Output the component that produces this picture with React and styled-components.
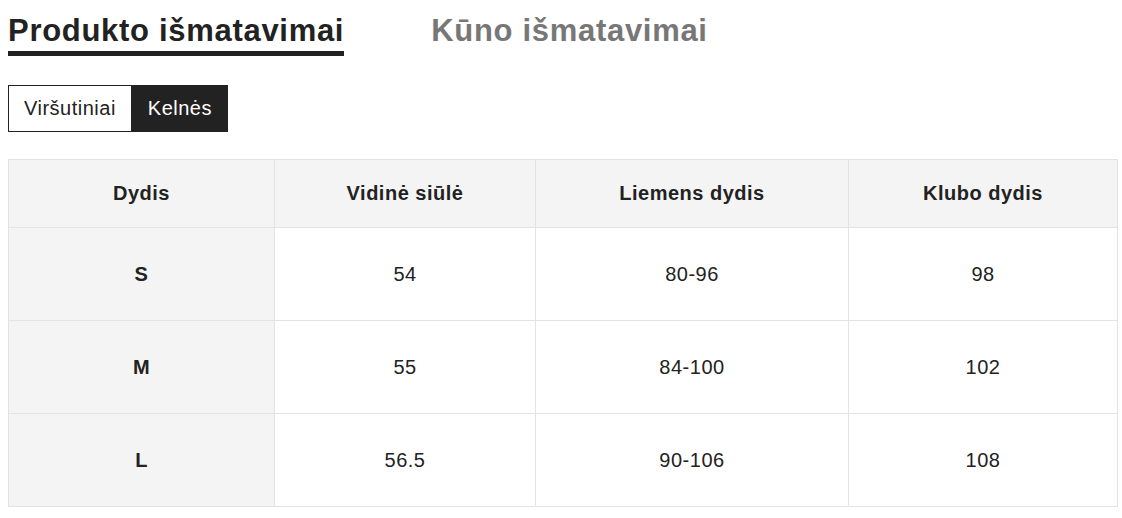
import React from "react";
import styled, { createGlobalStyle } from "styled-components";

const GlobalStyle = createGlobalStyle`
  body {
    margin: 0;
    background: #fff;
    font-family: "Liberation Sans", Arial, sans-serif;
    color: #222;
  }
`;

const Page = styled.div`
  padding: 0 6px 0 8px;
`;

const Headings = styled.div`
  display: flex;
  gap: 87px;
  padding-top: 13px;
`;

const Heading = styled.h2`
  margin: 0;
  font-size: 31px;
  letter-spacing: 0.7px;
  font-weight: 700;
  line-height: 36px;
  padding-bottom: 2px;
  color: ${({ active }) => (active ? "#222" : "#777")};
  border-bottom: 5px solid ${({ active }) => (active ? "#222" : "transparent")};
`;

const Tabs = styled.div`
  display: flex;
  margin-top: 29px;
`;

const Tab = styled.button`
  font-family: inherit;
  font-size: 20px;
  letter-spacing: 0.5px;
  height: 47px;
  padding: 0 15px;
  border: 1px solid #222;
  background: ${({ active }) => (active ? "#222" : "#fff")};
  color: ${({ active }) => (active ? "#fff" : "#222")};
  cursor: pointer;
`;

const Table = styled.table`
  margin-top: 27px;
  width: 1109px;
  border-collapse: collapse;
  table-layout: fixed;
  font-size: 20px;
  letter-spacing: 0.5px;
  text-align: center;
`;

const Th = styled.th`
  background: #f4f4f4;
  border: 1px solid #e3e3e3;
  height: 65px;
  font-weight: 700;
`;

const Td = styled.td`
  border: 1px solid #e3e3e3;
  height: 90px;
  background: ${({ head }) => (head ? "#f4f4f4" : "#fff")};
  font-weight: ${({ head }) => (head ? 700 : 400)};
`;

const columns = [
  { title: "Dydis", width: 266 },
  { title: "Vidinė siūlė", width: 261 },
  { title: "Liemens dydis", width: 313 },
  { title: "Klubo dydis", width: 269 },
];

const rows = [
  ["S", "54", "80-96", "98"],
  ["M", "55", "84-100", "102"],
  ["L", "56.5", "90-106", "108"],
];

export default function App() {
  return (
    <Page>
      <GlobalStyle />
      <Headings>
        <Heading active>Produkto išmatavimai</Heading>
        <Heading>Kūno išmatavimai</Heading>
      </Headings>
      <Tabs>
        <Tab>Viršutiniai</Tab>
        <Tab active>Kelnės</Tab>
      </Tabs>
      <Table>
        <colgroup>
          {columns.map((c) => (
            <col key={c.title} style={{ width: c.width }} />
          ))}
        </colgroup>
        <thead>
          <tr>
            {columns.map((c) => (
              <Th key={c.title}>{c.title}</Th>
            ))}
          </tr>
        </thead>
        <tbody>
          {rows.map((r) => (
            <tr key={r[0]}>
              {r.map((v, i) => (
                <Td key={i} head={i === 0}>
                  {v}
                </Td>
              ))}
            </tr>
          ))}
        </tbody>
      </Table>
    </Page>
  );
}
